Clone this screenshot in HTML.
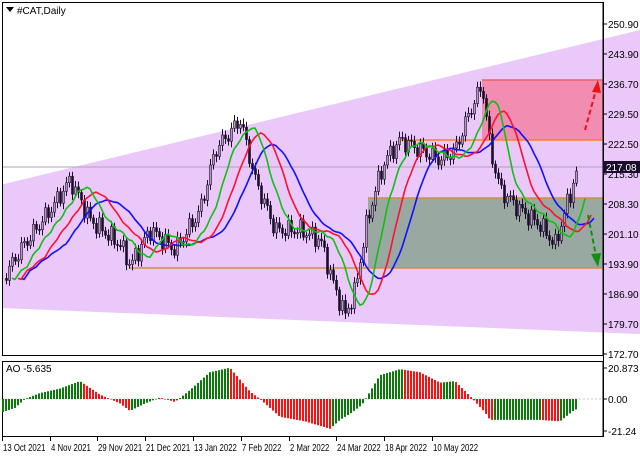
<!DOCTYPE html>
<html><head><meta charset="utf-8"><style>
body{margin:0;background:#fff;width:640px;height:457px;overflow:hidden;font-family:"Liberation Sans",sans-serif}
svg text{font-family:"Liberation Sans",sans-serif;font-size:10px;fill:#000}
</style></head><body>
<svg id="s" width="640" height="457" viewBox="0 0 640 457" xmlns="http://www.w3.org/2000/svg">
<rect width="640" height="457" fill="#fff"/>
<polygon points="0,185 640,30 640,334 0,308" fill="#ebc8fa"/>
<rect x="0" y="0" width="2" height="457" fill="#fff"/>
<line x1="2" y1="167" x2="603" y2="167" fill="none" stroke="#b0a0b8" stroke-width="1"/>
<rect x="482" y="80" width="121" height="60" fill="#f28cb0"/>
<line x1="482" y1="80" x2="603" y2="80" stroke="#f06060" stroke-width="1.5"/>
<rect x="368" y="198" width="235" height="70" fill="#9aa8a2"/>
<line x1="400" y1="140" x2="603" y2="140" stroke="#ff7f1e" stroke-width="1.5"/>
<line x1="368" y1="198" x2="603" y2="198" stroke="#d09040" stroke-width="1.5"/>
<line x1="130" y1="268" x2="603" y2="268" stroke="#d09040" stroke-width="1.5"/>
<g id="cdl"></g>
<g id="ma"></g>
<line x1="585" y1="130" x2="596" y2="90" stroke="#f01010" stroke-width="2" stroke-dasharray="5,3"/>
<polygon points="598,80 592,92 601,93" fill="#f01010"/>
<line x1="588" y1="215" x2="596" y2="256" stroke="#109010" stroke-width="2" stroke-dasharray="5,3"/>
<polygon points="598,267 591,254 601,253" fill="#109010"/>
<rect x="2.5" y="2.5" width="600.5" height="353" fill="none" stroke="#000" stroke-width="1"/>
<rect x="2.5" y="361.5" width="600.5" height="75" fill="#fff" stroke="#000" stroke-width="1"/>
<line x1="3" y1="399" x2="603" y2="399" stroke="#c8c8c8" stroke-dasharray="2,2"/>
<g id="ao"></g>
<polygon points="6,7 14,7 10,12" fill="#000"/>
<text x="17" y="14">#CAT,Daily</text>
<text x="6" y="372">AO -5.635</text>
<g id="ax"></g>
<rect x="603" y="161" width="37" height="12" fill="#1a0e2a"/>
<text x="606" y="171" style="fill:#fff">217.08</text>
</svg>
<script>
var NS="http://www.w3.org/2000/svg";
function el(p,t,a){var e=document.createElementNS(NS,t);for(var k in a)e.setAttribute(k,a[k]);p.appendChild(e);return e;}
function interp(kf,x){for(var i=0;i<kf.length-1;i++){if(x>=kf[i][0]&&x<=kf[i+1][0]){var t=(x-kf[i][0])/(kf[i+1][0]-kf[i][0]);return kf[i][1]+t*(kf[i+1][1]-kf[i][1]);}}return x<kf[0][0]?kf[0][1]:kf[kf.length-1][1];}
var pk=[[2,280],[20,250],[50,210],[70,180],[90,220],[120,245],[130,265],[150,230],[175,250],[200,210],[215,150],[240,120],[255,180],[275,230],[300,230],[320,240],[335,290],[345,315],[355,290],[365,230],[375,190],[385,160],[400,140],[420,150],[440,160],[455,150],[470,110],[482,85],[490,150],[500,190],[520,210],[540,225],[555,245],[565,210],[577,170]];
var cg=document.getElementById('cdl'),N=192,cl=[],xs=[];
for(var i=0;i<N;i++){var x=3+3*i;xs.push(x);cl.push(interp(pk,x)+7*Math.sin(i*1.7)+4*Math.sin(i*3.1));}
for(var i=1;i<N;i++){var o=cl[i-1],c=cl[i],x=xs[i];if(x>580)break;var hi=Math.min(o,c)-3-3*Math.abs(Math.sin(i*2.3)),lo=Math.max(o,c)+3+3*Math.abs(Math.cos(i*1.9));
el(cg,'line',{x1:x+.5,y1:hi,x2:x+.5,y2:lo,stroke:'#1a0e2a','stroke-width':1});
var bull=c<o;el(cg,'rect',{x:x-.5,y:Math.min(o,c),width:2,height:Math.max(1,Math.abs(c-o)),fill:bull?'#b898c0':'#1a0e2a',stroke:'#1a0e2a','stroke-width':.6});}
function sma(n,sh){var r=[];for(var i=0;i<N;i++){var s=0,k=0;for(var j=i-n+1;j<=i;j++){if(j>=0){s+=cl[j];k++;}}r.push(s/k);}var p='';for(var i=0;i<N;i++){var x=xs[i]+sh*3;if(x>598)break;p+=(i?'L':'M')+x+','+r[i].toFixed(1);}return p;}
var mg=document.getElementById('ma');
el(mg,'path',{d:sma(16,6),fill:'none',stroke:'#1010ff','stroke-width':1.6});
el(mg,'path',{d:sma(10,5),fill:'none',stroke:'#ff1030','stroke-width':1.6});
el(mg,'path',{d:sma(6,3),fill:'none',stroke:'#10c010','stroke-width':1.6});
var ak=[[2,-9],[15,-6],[25,0],[40,4],[60,7],[80,12],[100,3],[120,-3],[130,-8],[145,-3],[160,1],[175,-2],[190,6],[210,18],[230,21],[250,5],[260,0],[280,-12],[305,-15],[330,-20],[340,-14],[350,-10],[362,-4],[380,16],[400,20],[420,18],[440,11],[455,12],[470,2],[485,-9],[490,-14],[510,-14],[540,-14],[560,-15],[575,-7]];
var ag=document.getElementById('ao'),prev=null;
for(var i=0;i<N;i++){var x=xs[i];if(x>578)break;var v=interp(ak,x);var h=v*1.49;var col=(prev===null||v>=prev)?'#0a7a0a':'#ff1010';prev=v;
el(ag,'rect',{x:x-1,y:h>0?399-h:399,width:2,height:Math.max(.5,Math.abs(h)),fill:col});}
var ax=document.getElementById('ax');
el(ax,'line',{x1:603.5,y1:2,x2:603.5,y2:437,stroke:'#000'});
var pr=['250.90','243.90','236.70','229.50','222.50','215.30','208.30','201.10','193.90','186.90','179.70','172.70'];
pr.forEach(function(p,i){var y=24+i*30;el(ax,'line',{x1:603,y1:y,x2:607,y2:y,stroke:'#000'});var t=el(ax,'text',{x:608,y:y+4});t.textContent=p;});
[[368,'20.873'],[399,'0.00'],[431,'-21.24']].forEach(function(a){el(ax,'line',{x1:603,y1:a[0],x2:607,y2:a[0],stroke:'#000'});var t=el(ax,'text',{x:608,y:a[0]+4});t.textContent=a[1];});
var ds=[[2,'13 Oct 2021'],[50,'4 Nov 2021'],[97,'29 Nov 2021'],[145,'21 Dec 2021'],[193,'13 Jan 2022'],[241,'7 Feb 2022'],[289,'2 Mar 2022'],[336,'24 Mar 2022'],[384,'18 Apr 2022'],[432,'10 May 2022']];
ds.forEach(function(d){el(ax,'line',{x1:d[0]+.5,y1:437,x2:d[0]+.5,y2:441,stroke:'#000'});var t=el(ax,'text',{x:0,y:0,transform:'translate('+(d[0]+1)+',451) scale(0.78,1)'});t.textContent=d[1];});
</script>
</body></html>
